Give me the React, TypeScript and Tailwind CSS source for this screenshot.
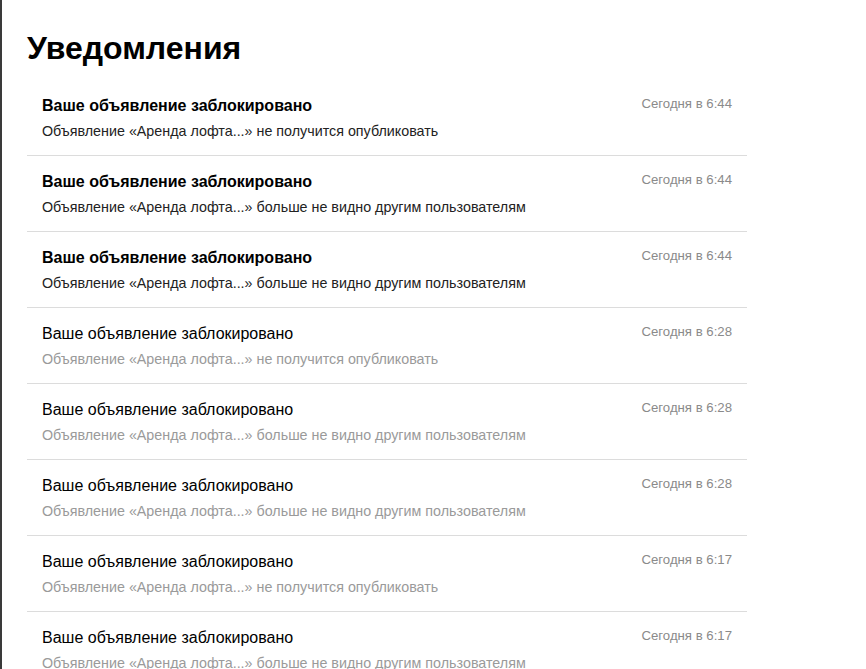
const items = [
  { unread: true, text: 'не получится опубликовать', time: '6:44' },
  { unread: true, text: 'больше не видно другим пользователям', time: '6:44' },
  { unread: true, text: 'больше не видно другим пользователям', time: '6:44' },
  { unread: false, text: 'не получится опубликовать', time: '6:28' },
  { unread: false, text: 'больше не видно другим пользователям', time: '6:28' },
  { unread: false, text: 'больше не видно другим пользователям', time: '6:28' },
  { unread: false, text: 'не получится опубликовать', time: '6:17' },
  { unread: false, text: 'больше не видно другим пользователям', time: '6:17' },
];

export default function App() {
  return (
    <div className="h-[669px] overflow-hidden border-l-2 border-[#3a3a3a] bg-white font-['Liberation_Sans',Arial,sans-serif]">
      <div className="pl-[25px] pt-[30px]">
        <h1 className="text-[32px] font-bold leading-[36px] text-black">Уведомления</h1>
        <ul className="mt-[14px] w-[720px]">
          {items.map((it, i) => (
            <li
              key={i}
              className="flex items-start justify-between border-b border-[#dcdcdc] pb-[14px] pl-[15px] pr-[15px] pt-[16px]"
            >
              <div>
                <div className={`text-[16px] leading-[20px] text-black ${it.unread ? 'font-bold' : ''}`}>
                  Ваше объявление заблокировано
                </div>
                <div className={`mt-[5px] text-[14.3px] leading-[20px] ${it.unread ? 'text-[#222]' : 'text-[#9a9a9a]'}`}>
                  Объявление «Аренда лофта...» {it.text}
                </div>
              </div>
              <div className="-mt-[1px] text-[13.2px] leading-[18px] text-[#8a8a8a]">Сегодня в {it.time}</div>
            </li>
          ))}
        </ul>
      </div>
    </div>
  );
}
